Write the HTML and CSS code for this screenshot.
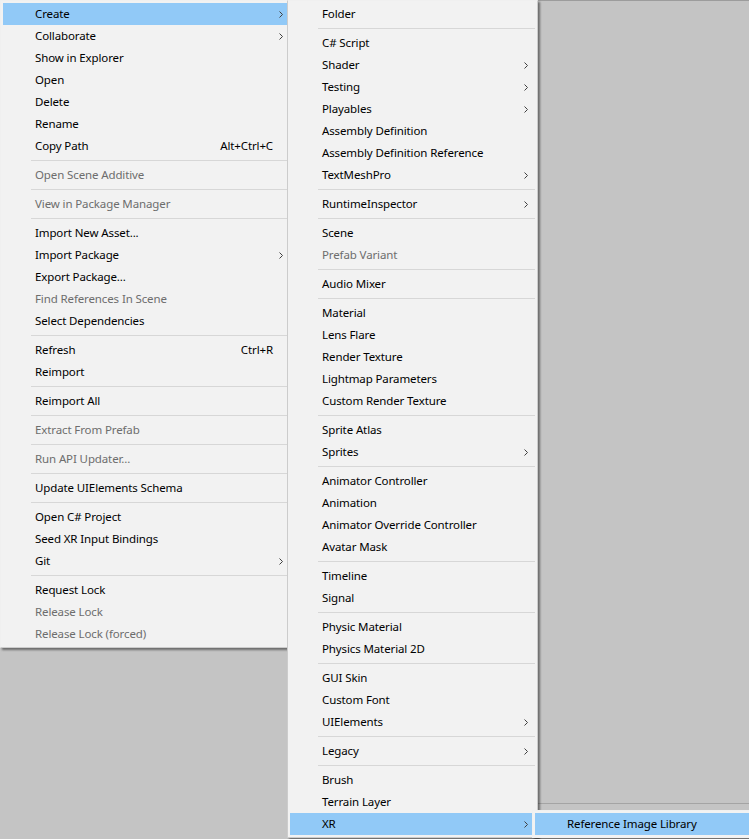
FILE: index.html
```html
<!DOCTYPE html>
<html>
<head>
<meta charset="utf-8">
<link rel="stylesheet" href="styles.css">
</head>
<body>
<div class="desk">
  <div class="desk-line top"></div>
  <div class="desk-line low"></div>

  <div class="menu menu-main">
    <div class="item hot"><span class="label">Create</span><span class="arrow"><svg width="4" height="7" viewBox="0 0 4 7"><path d="M0.5 0.5 L3.5 3.5 L0.5 6.5" fill="none" stroke="#404040" stroke-width="1"/></svg></span></div>
    <div class="item"><span class="label">Collaborate</span><span class="arrow"><svg width="4" height="7" viewBox="0 0 4 7"><path d="M0.5 0.5 L3.5 3.5 L0.5 6.5" fill="none" stroke="#404040" stroke-width="1"/></svg></span></div>
    <div class="item"><span class="label">Show in Explorer</span><span class="arrow"></span></div>
    <div class="item"><span class="label">Open</span><span class="arrow"></span></div>
    <div class="item"><span class="label">Delete</span><span class="arrow"></span></div>
    <div class="item"><span class="label">Rename</span><span class="arrow"></span></div>
    <div class="item"><span class="label">Copy Path</span><span class="key">Alt+Ctrl+C</span><span class="arrow"></span></div>
    <div class="sep"></div>
    <div class="item off"><span class="label">Open Scene Additive</span><span class="arrow"></span></div>
    <div class="sep"></div>
    <div class="item off"><span class="label">View in Package Manager</span><span class="arrow"></span></div>
    <div class="sep"></div>
    <div class="item"><span class="label">Import New Asset...</span><span class="arrow"></span></div>
    <div class="item"><span class="label">Import Package</span><span class="arrow"><svg width="4" height="7" viewBox="0 0 4 7"><path d="M0.5 0.5 L3.5 3.5 L0.5 6.5" fill="none" stroke="#404040" stroke-width="1"/></svg></span></div>
    <div class="item"><span class="label">Export Package...</span><span class="arrow"></span></div>
    <div class="item off"><span class="label">Find References In Scene</span><span class="arrow"></span></div>
    <div class="item"><span class="label">Select Dependencies</span><span class="arrow"></span></div>
    <div class="sep"></div>
    <div class="item"><span class="label">Refresh</span><span class="key">Ctrl+R</span><span class="arrow"></span></div>
    <div class="item"><span class="label">Reimport</span><span class="arrow"></span></div>
    <div class="sep"></div>
    <div class="item"><span class="label">Reimport All</span><span class="arrow"></span></div>
    <div class="sep"></div>
    <div class="item off"><span class="label">Extract From Prefab</span><span class="arrow"></span></div>
    <div class="sep"></div>
    <div class="item off"><span class="label">Run API Updater...</span><span class="arrow"></span></div>
    <div class="sep"></div>
    <div class="item"><span class="label">Update UIElements Schema</span><span class="arrow"></span></div>
    <div class="sep"></div>
    <div class="item"><span class="label">Open C# Project</span><span class="arrow"></span></div>
    <div class="item"><span class="label">Seed XR Input Bindings</span><span class="arrow"></span></div>
    <div class="item"><span class="label">Git</span><span class="arrow"><svg width="4" height="7" viewBox="0 0 4 7"><path d="M0.5 0.5 L3.5 3.5 L0.5 6.5" fill="none" stroke="#404040" stroke-width="1"/></svg></span></div>
    <div class="sep"></div>
    <div class="item"><span class="label">Request Lock</span><span class="arrow"></span></div>
    <div class="item off"><span class="label">Release Lock</span><span class="arrow"></span></div>
    <div class="item off"><span class="label">Release Lock (forced)</span><span class="arrow"></span></div>
  </div>

  <div class="menu menu-create">
    <div class="item"><span class="label">Folder</span><span class="arrow"></span></div>
    <div class="sep"></div>
    <div class="item"><span class="label">C# Script</span><span class="arrow"></span></div>
    <div class="item"><span class="label">Shader</span><span class="arrow"><svg width="4" height="7" viewBox="0 0 4 7"><path d="M0.5 0.5 L3.5 3.5 L0.5 6.5" fill="none" stroke="#404040" stroke-width="1"/></svg></span></div>
    <div class="item"><span class="label">Testing</span><span class="arrow"><svg width="4" height="7" viewBox="0 0 4 7"><path d="M0.5 0.5 L3.5 3.5 L0.5 6.5" fill="none" stroke="#404040" stroke-width="1"/></svg></span></div>
    <div class="item"><span class="label">Playables</span><span class="arrow"><svg width="4" height="7" viewBox="0 0 4 7"><path d="M0.5 0.5 L3.5 3.5 L0.5 6.5" fill="none" stroke="#404040" stroke-width="1"/></svg></span></div>
    <div class="item"><span class="label">Assembly Definition</span><span class="arrow"></span></div>
    <div class="item"><span class="label">Assembly Definition Reference</span><span class="arrow"></span></div>
    <div class="item"><span class="label">TextMeshPro</span><span class="arrow"><svg width="4" height="7" viewBox="0 0 4 7"><path d="M0.5 0.5 L3.5 3.5 L0.5 6.5" fill="none" stroke="#404040" stroke-width="1"/></svg></span></div>
    <div class="sep"></div>
    <div class="item"><span class="label">RuntimeInspector</span><span class="arrow"><svg width="4" height="7" viewBox="0 0 4 7"><path d="M0.5 0.5 L3.5 3.5 L0.5 6.5" fill="none" stroke="#404040" stroke-width="1"/></svg></span></div>
    <div class="sep"></div>
    <div class="item"><span class="label">Scene</span><span class="arrow"></span></div>
    <div class="item off"><span class="label">Prefab Variant</span><span class="arrow"></span></div>
    <div class="sep"></div>
    <div class="item"><span class="label">Audio Mixer</span><span class="arrow"></span></div>
    <div class="sep"></div>
    <div class="item"><span class="label">Material</span><span class="arrow"></span></div>
    <div class="item"><span class="label">Lens Flare</span><span class="arrow"></span></div>
    <div class="item"><span class="label">Render Texture</span><span class="arrow"></span></div>
    <div class="item"><span class="label">Lightmap Parameters</span><span class="arrow"></span></div>
    <div class="item"><span class="label">Custom Render Texture</span><span class="arrow"></span></div>
    <div class="sep"></div>
    <div class="item"><span class="label">Sprite Atlas</span><span class="arrow"></span></div>
    <div class="item"><span class="label">Sprites</span><span class="arrow"><svg width="4" height="7" viewBox="0 0 4 7"><path d="M0.5 0.5 L3.5 3.5 L0.5 6.5" fill="none" stroke="#404040" stroke-width="1"/></svg></span></div>
    <div class="sep"></div>
    <div class="item"><span class="label">Animator Controller</span><span class="arrow"></span></div>
    <div class="item"><span class="label">Animation</span><span class="arrow"></span></div>
    <div class="item"><span class="label">Animator Override Controller</span><span class="arrow"></span></div>
    <div class="item"><span class="label">Avatar Mask</span><span class="arrow"></span></div>
    <div class="sep"></div>
    <div class="item"><span class="label">Timeline</span><span class="arrow"></span></div>
    <div class="item"><span class="label">Signal</span><span class="arrow"></span></div>
    <div class="sep"></div>
    <div class="item"><span class="label">Physic Material</span><span class="arrow"></span></div>
    <div class="item"><span class="label">Physics Material 2D</span><span class="arrow"></span></div>
    <div class="sep"></div>
    <div class="item"><span class="label">GUI Skin</span><span class="arrow"></span></div>
    <div class="item"><span class="label">Custom Font</span><span class="arrow"></span></div>
    <div class="item"><span class="label">UIElements</span><span class="arrow"><svg width="4" height="7" viewBox="0 0 4 7"><path d="M0.5 0.5 L3.5 3.5 L0.5 6.5" fill="none" stroke="#404040" stroke-width="1"/></svg></span></div>
    <div class="sep"></div>
    <div class="item"><span class="label">Legacy</span><span class="arrow"><svg width="4" height="7" viewBox="0 0 4 7"><path d="M0.5 0.5 L3.5 3.5 L0.5 6.5" fill="none" stroke="#404040" stroke-width="1"/></svg></span></div>
    <div class="sep"></div>
    <div class="item"><span class="label">Brush</span><span class="arrow"></span></div>
    <div class="item"><span class="label">Terrain Layer</span><span class="arrow"></span></div>
    <div class="item hot"><span class="label">XR</span><span class="arrow"><svg width="4" height="7" viewBox="0 0 4 7"><path d="M0.5 0.5 L3.5 3.5 L0.5 6.5" fill="none" stroke="#404040" stroke-width="1"/></svg></span></div>
  </div>

  <div class="menu menu-xr">
    <div class="item hot"><span class="label">Reference Image Library</span><span class="arrow"></span></div>
  </div>
</div>
</body>
</html>
```

FILE: styles.css
```css
html, body {
  margin: 0;
  padding: 0;
  width: 749px;
  height: 839px;
  overflow: hidden;
  background: #c4c4c4;
}

.desk {
  position: relative;
  width: 749px;
  height: 839px;
  background: #c4c4c4;
  overflow: hidden;
  font-family: "Noto Sans", "Open Sans", sans-serif;
  font-size: 11.5px;
  letter-spacing: -0.12px;
  color: #000;
}

.desk-line {
  position: absolute;
  left: 538px;
  right: 0;
  height: 1px;
  background: #9c9c9c;
}
.desk-line.top { top: 0; }
.desk-line.low { top: 803px; background: #a4a4a4; }

.menu {
  position: absolute;
  box-sizing: border-box;
  background: #f2f2f2;
  border: 1px solid #cccccc;
  padding: 2px;
  box-shadow: 2px 2px 2px rgba(0, 0, 0, 0.45);
}

.menu-main {
  left: 0;
  top: 0;
  width: 293px;
  z-index: 1;
  border-top-color: #f0f0f0;
  border-left-color: #f0f0f0;
}

.menu-create {
  left: 287px;
  top: 0;
  width: 251px;
  z-index: 2;
  border-top-color: #f0f0f0;
}

.menu-xr {
  left: 532px;
  top: 810px;
  width: 240px;
  z-index: 3;
  border-color: #f0f0f0;
}

.item {
  display: flex;
  align-items: center;
  height: 22px;
  line-height: 22px;
  padding-left: 32px;
  white-space: nowrap;
}

.item.hot {
  background: #91c9f7;
}

.item.off {
  color: #6d6d6d;
}

.label {
  flex: 1;
}

.key {
  margin-left: 12px;
}

.arrow {
  width: 17px;
  height: 22px;
  display: flex;
  align-items: center;
  justify-content: flex-end;
  padding-right: 7px;
  box-sizing: border-box;
}

.arrow svg {
  display: block;
}

.sep {
  height: 7px;
  box-sizing: border-box;
  padding-top: 3px;
  margin-left: 28px;
}
.sep::before {
  content: "";
  display: block;
  height: 1px;
  background: #d7d7d7;
}
```
